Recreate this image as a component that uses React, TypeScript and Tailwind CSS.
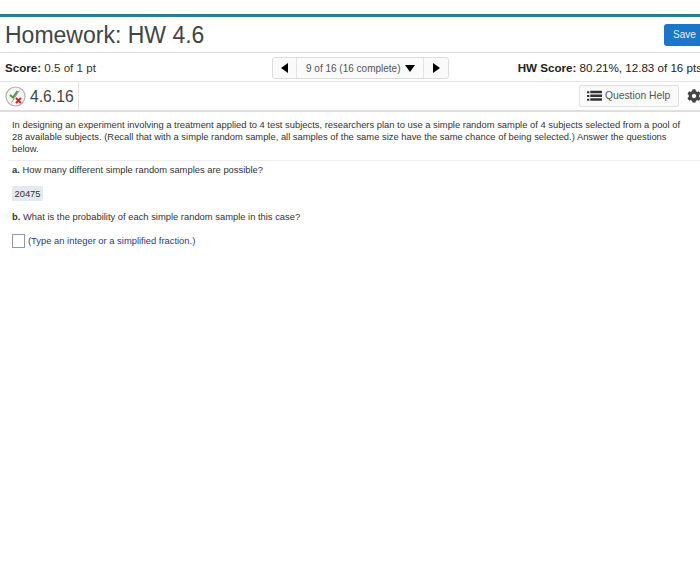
import React from 'react';
import { FaCog } from 'react-icons/fa';

const App: React.FC = () => {
  return (
    <div className="w-[700px] h-[575px] overflow-hidden bg-white font-['Liberation_Sans',Arial,sans-serif] text-[#333]">
      {/* Top rule */}
      <div className="h-[17px] border-b-[3px] border-[#2b7c93]"></div>

      {/* Title */}
      <div className="h-[36px] flex items-center justify-between border-b border-[#dcdcdc] pl-[5px]">
        <h1 className="text-[23px] leading-none text-[#444] mt-[1px]">Homework: HW 4.6</h1>
        <button className="w-[36px] h-[22px] rounded-l-[3px] bg-[#1a76c9] text-[#e8f2fb] text-[10px] text-left pl-[9px]">Save</button>
      </div>

      {/* Score row */}
      <div className="relative h-[29px] flex items-center justify-between border-b border-[#e6e6e6] pl-[5px] text-[11.6px] text-[#222]">
        <div className="w-[150px] mt-[1px]"><b>Score:</b> <span className="text-[#333]">0.5 of 1 pt</span></div>
        <div className="absolute left-[272px] top-[4px] h-[22px] w-[177px] flex items-center border border-[#ddd] rounded-[3px] bg-[#fafafa]">
          <div className="w-[24px] h-full flex items-center justify-center border-r border-[#e2e2e2]">
            <span className="w-0 h-0 border-y-[5px] border-y-transparent border-r-[7px] border-r-black"></span>
          </div>
          <div className="w-[126px] pl-[9px] flex items-center text-[10px] text-[#555] whitespace-nowrap h-full">
            9 of 16 (16 complete)
            <span className="ml-[4px] w-0 h-0 border-x-[5px] border-x-transparent border-t-[7px] border-t-black"></span>
          </div>
          <div className="flex-1 h-full flex items-center justify-center border-l border-[#e2e2e2]">
            <span className="w-0 h-0 border-y-[5px] border-y-transparent border-l-[7px] border-l-black"></span>
          </div>
        </div>
        <div className="whitespace-nowrap mt-[1px] mr-[-2px]"><b>HW Score:</b> 80.21%, 12.83 of 16 pts</div>
      </div>

      {/* Question row */}
      <div className="h-[30px] flex items-center justify-between border-b-2 border-[#dedede]">
        <div className="h-full w-[79px] flex items-center pl-[5px] border-r border-[#e2e2e2]">
          <svg width="21" height="21" viewBox="0 0 21 21">
            <circle cx="10.5" cy="10.5" r="9.5" fill="#f4f4f4" stroke="#b5b5b5" strokeWidth="1.2" />
            <path d="M5 9 L8 11.5 L12.5 5" fill="none" stroke="#4a9d45" strokeWidth="2" />
            <path d="M14.5 4.5 L6.5 16.5" stroke="#888" strokeWidth="0.8" />
            <path d="M11 12 L16 17 M16 12 L11 17" stroke="#d2232a" strokeWidth="2" />
          </svg>
          <span className="ml-[4px] mt-[1px] text-[15.7px] text-[#444]">4.6.16</span>
        </div>
        <div className="flex items-center">
          <button className="h-[22px] w-[100px] flex items-center pl-[7px] gap-[3px] border border-[#e0e0e0] rounded-[2px] bg-[#fafafa] text-[10.3px] text-[#555]">
            <svg width="15" height="12" viewBox="0 0 16 12" fill="#333" className="shrink-0">
              <path d="M0 1h2.5v2H0zM0 5h2.5v2H0zM0 9h2.5v2H0zM3.5 0.5H16v2.6H3.5zM3.5 4.5H16v2.6H3.5zM3.5 8.5H16v2.6H3.5z" />
            </svg>
            Question Help
          </button>
          <FaCog size={14} className="ml-[8px] mr-[-1px] text-[#444]" />
        </div>
      </div>

      {/* Question body */}
      <div className="pl-[12px] text-[9.4px] leading-[12px] text-[#333]">
        <p className="pt-[7px] pb-[5px] w-[676px]">
          In designing an experiment involving a treatment applied to 4 test subjects, researchers plan to use a simple random sample of 4 subjects selected from a pool of 28 available subjects. (Recall that with a simple random sample, all samples of the same size have the same chance of being selected.) Answer the questions below.
        </p>
        <div className="border-t border-[#eee] ml-[-4px] pl-[4px] pt-[3px]">
          <p><b>a.</b> How many different simple random samples are possible?</p>
          <div className="mt-[10px] w-[31px] h-[15px] flex items-center justify-center bg-[#e3e9f1] text-[#333]">20475</div>
          <p className="mt-[10px]"><b>b.</b> What is the probability of each simple random sample in this case?</p>
          <div className="mt-[11px] flex items-center">
            <div className="w-[13px] h-[14px] border border-[#8a9ab0]"></div>
            <span className="ml-[3px] text-[#2d3a80]">(Type an integer or a simplified fraction.)</span>
          </div>
        </div>
      </div>
    </div>
  );
};

export default App;
